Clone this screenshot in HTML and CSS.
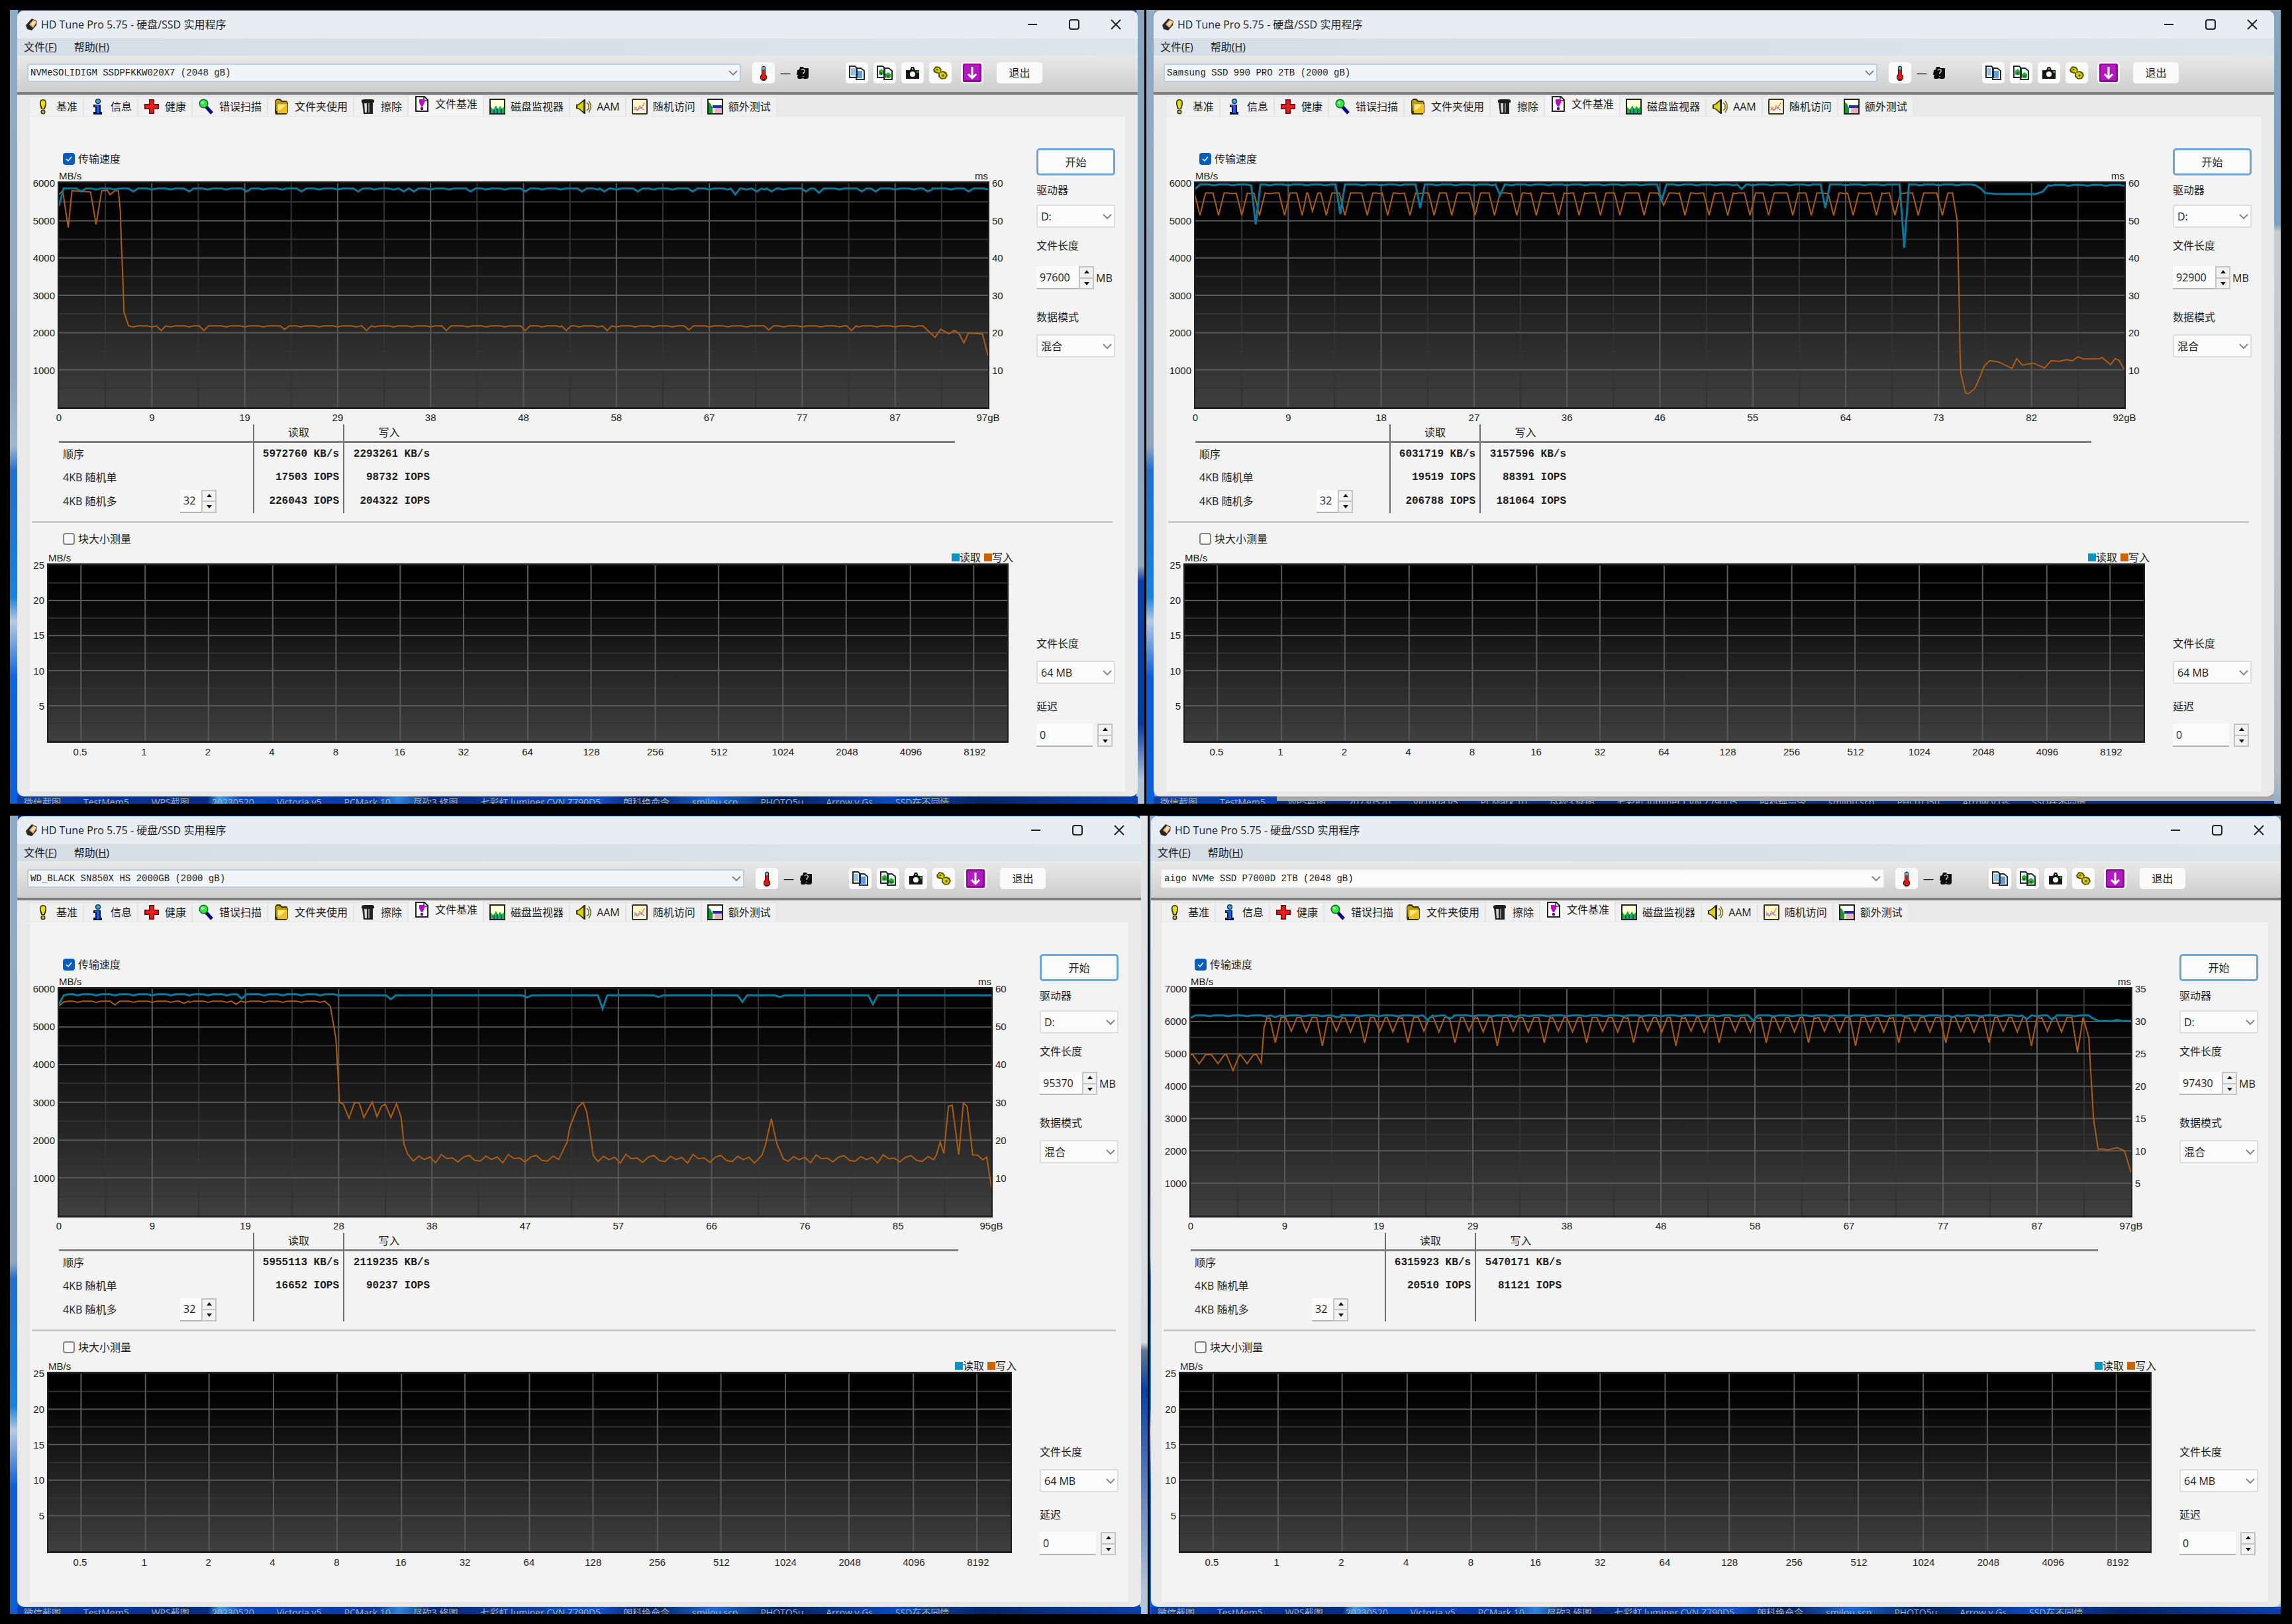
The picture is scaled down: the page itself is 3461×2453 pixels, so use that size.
FILE: index.html
```html
<!doctype html>
<html lang="zh-CN">
  <head>
    <meta charset="UTF-8" />
    <meta content="width=device-width, initial-scale=1.0" name="viewport" />
    <title>HD Tune Pro 5.75 - 硬盘/SSD 实用程序</title>
    <link rel="stylesheet" href="styles.css">
  </head>
  <body>
    <svg class="sprite" aria-hidden="true">
      <defs>
        <linearGradient id="plotFill" x1="0" y1="0" x2="0" y2="1">
          <stop offset="0.1" stop-color="#000" />
          <stop offset="1" stop-color="#404040" />
        </linearGradient>
      </defs>
      <symbol id="i-app" viewBox="0 0 20 20">
        <path d="M1 11L10 1l8 4-1 6-7 8-7-2z" fill="#2a2320" />
        <path d="M6 10l6-7 6 3-6 9z" fill="#e9b877" />
        <path d="M9 9l4-4 3 1-4 6z" fill="#fbe3bd" />
      </symbol>
      <symbol id="i-bench" viewBox="0 0 24 24">
        <path d="M12 1c4 0 5 3 5 6 0 4-2 6-2 9H9c0-3-2-5-2-9 0-3 1-6 5-6z" fill="#222" />
        <path d="M12 2.500c3 0 3.500 2 3.500 4.500 0 3-2 5-2 8h-3c0-3-2-5-2-8 0-2.500.5-4.500 3.500-4.500z" fill="#e8e000" />
        <circle cx="12" cy="20" r="3.500" fill="#222" />
        <circle cx="12" cy="20" r="2" fill="#d8cf00" />
      </symbol>
      <symbol id="i-info" viewBox="0 0 24 24">
        <circle cx="13" cy="4" r="4" fill="#112" />
        <circle cx="13" cy="4" r="2.800" fill="#22b8e6" />
        <path d="M6 9h11v11h2v4H6v-4h3v-7H6z" fill="#0a1440" />
        <path d="M8 10h7v12h-4V12H8z" fill="#1a5cf0" />
      </symbol>
      <symbol id="i-health" viewBox="0 0 24 24">
        <path d="M8 1h8v7h7v8h-7v7H8v-7H1V8h7z" fill="#5a0c0c" />
        <path d="M9.500 2.500h5v7h7v5h-7v7h-5v-7h-7v-5h7z" fill="#ee1c1c" />
      </symbol>
      <symbol id="i-scan" viewBox="0 0 24 24">
        <path d="M12 12l9 10" stroke="#0a0a7a" stroke-width="5" />
        <circle cx="8.500" cy="7.500" r="7" fill="#14641c" />
        <circle cx="8.500" cy="7.500" r="5.500" fill="#35e84a" />
        <circle cx="7" cy="6" r="2" fill="#a8ffb0" />
      </symbol>
      <symbol id="i-folder" viewBox="0 0 24 24">
        <path d="M2 3l3-3h5l3 3h7l2 4v14l-3 3H3l-1-3z" fill="#3a3208" />
        <path d="M3 4l2-2h4l3 3h8v14H4z" fill="#b79a10" />
        <rect x="6" y="8" width="15" height="14" rx="1" fill="#f0c020" />
        <path d="M7 9h12l-9 8H7z" fill="#ffe878" />
      </symbol>
      <symbol id="i-trash" viewBox="0 0 24 24">
        <path d="M3 2l4-1h12l3 1v4H3z" fill="#1c1c1c" />
        <path d="M4 6h16v17H6z" fill="#222" />
        <path d="M7 7h4v14H8z" fill="#d4d4d4" />
        <path d="M13 7h2v14h-2z" fill="#888" />
      </symbol>
      <symbol id="i-filebench" viewBox="0 0 24 24">
        <path d="M3 1h13l5 5v17H3z" fill="#fff" stroke="#222" stroke-width="2" />
        <path d="M15 1v6h6" fill="none" stroke="#222" stroke-width="1.500" />
        <path d="M8 5h8v5l-3 6h-2l-3-6z" fill="#c000c8" />
        <circle cx="12" cy="19" r="2.200" fill="#6a0070" />
      </symbol>
      <symbol id="i-monitor" viewBox="0 0 24 24">
        <rect x="1" y="1" width="22" height="22" fill="#ffffd8" stroke="#222" stroke-width="2" />
        <path d="M2 22V12l3 4 2-1 3-5 3 6 3-5 3 4 3-3v10z" fill="#18b82c" />
        <path d="M6 22v-5h2v5zM11 22v-7h2v7zM17 22v-6h2v6z" fill="#1636e0" />
      </symbol>
      <symbol id="i-sound" viewBox="0 0 24 24">
        <path d="M1 9l4-1 8-7h2v22h-2l-8-7-4-1z" fill="#2a2800" />
        <path d="M3 10l3-1 6-5v16l-6-5-3-1z" fill="#e0d400" />
        <path d="M17 6l3 3v6l-3 3M20 3l3 6v6l-3 6" fill="none" stroke="#6b6600" stroke-width="1.500" />
      </symbol>
      <symbol id="i-random" viewBox="0 0 24 24">
        <rect x="1" y="1" width="22" height="22" rx="1" fill="#fff6c8" stroke="#333" stroke-width="2" />
        <path d="M4 17l3-3 2 4 3-7 3 3 4-8" fill="none" stroke="#e05a3a" stroke-width="1.500" stroke-dasharray="2 1" />
        <path d="M4 12l4 6 5-4 6 3" fill="none" stroke="#9a90e8" stroke-width="1.500" />
      </symbol>
      <symbol id="i-extra" viewBox="0 0 24 24">
        <rect x="1" y="1" width="22" height="22" fill="#fffff0" stroke="#222" stroke-width="2" />
        <path d="M2 6c3 0 4 4 6 8v8H2z" fill="#149a28" />
        <path d="M8 10h14v4H8z" fill="#2030b0" />
        <path d="M11 14h11v8H11z" fill="#e8b0b8" />
      </symbol>
      <symbol id="i-thermo" viewBox="0 0 24 24">
        <path d="M9 3q3-3 6 0v11l2 3v4l-3 3h-4l-3-3v-4l2-3z" fill="#3a1010" />
        <path d="M10 3h4v4h-4z" fill="#30d0d8" />
        <path d="M10 7h4v8l2 3v3l-2 1h-4l-2-1v-3l2-3z" fill="#e81414" />
      </symbol>
      <symbol id="i-degree" viewBox="0 0 20 20">
        <path d="M2 6l3-1 1-4h5l1 2h7v14l-2 2h-5l-2-1-2 1H3l-1-3 1-3H1z" fill="#0c0c0c" />
        <path d="M8 6q3-3 5 0 1 3-2 4v2M11 15v1" fill="none" stroke="#ccc" stroke-width="1.500" />
      </symbol>
      <symbol id="i-copy" viewBox="0 0 24 24">
        <path d="M1 2h8l3 3v14H1zM11 5h7l5 4v13H11z" fill="#fff" stroke="#2a2a2a" stroke-width="2" />
        <path d="M3 5h6v11H3z" fill="#8ac4f4" />
        <path d="M13 9h7v11h-7z" fill="#5a9cf0" />
      </symbol>
      <symbol id="i-copyimg" viewBox="0 0 24 24">
        <path d="M1 2h8l3 3v14H1zM11 5h7l5 4v13H11z" fill="#e8f4ff" stroke="#2a2a2a" stroke-width="2" />
        <path d="M3 9l4-3 3 3v6l-4-1-3 1zM13 14l4-3 4 3v5l-4 1-4-1z" fill="#28b428" />
        <path d="M5 11h3v4H5zM15 16h4v3h-4z" fill="#166a16" />
      </symbol>
      <symbol id="i-camera" viewBox="0 0 24 24">
        <path d="M2 8h6l2-5h4l2 5h6v13H2z" fill="#161616" />
        <circle cx="12" cy="14" r="4" fill="#fff" />
        <path d="M11 5h2v2h-2z" fill="#bbb" />
        <path d="M18 9h3v3h-3z" fill="#2ca82c" />
      </symbol>
      <symbol id="i-options" viewBox="0 0 24 24">
        <path d="M1 7l4-5 6 1 3 4-1 3 3-1 5 2 2 5-3 5-6 1-5-4v-5l-2 0-5-2z" fill="#5c5800" />
        <path d="M3 7l3-3 4 1 2 3-1 4 5-1 3 2 2 3-3 4-4 0-3-3 0-5-6-2z" fill="#d8ce00" />
        <circle cx="7" cy="7" r="1.500" fill="#5c5800" />
        <circle cx="16" cy="16" r="1.800" fill="#5c5800" />
      </symbol>
      <symbol id="i-save" viewBox="0 0 28 28">
        <rect width="28" height="28" rx="2" fill="#8c0a96" />
        <rect x="2" y="2" width="23" height="23" rx="1" fill="#b418c0" />
        <path d="M14 5v16M8 16l6 6 6-6" fill="none" stroke="#fff" stroke-width="3" />
      </symbol>
      <symbol id="i-min" viewBox="0 0 16 16"><path d="M1 8h14" stroke="#222" stroke-width="2" /></symbol>
      <symbol id="i-max" viewBox="0 0 16 16">
        <rect x="1" y="1" width="14" height="14" rx="3" fill="none" stroke="#222" stroke-width="2" />
      </symbol>
      <symbol id="i-close" viewBox="0 0 16 16"><path d="M1 1l14 14M15 1L1 15" stroke="#222" stroke-width="2" /></symbol>
      <symbol id="i-chevron" viewBox="0 0 14 14">
        <path d="M1 4l6 6 6-6" fill="none" stroke="#888" stroke-width="2" />
      </symbol>
      <symbol id="i-up" viewBox="0 0 8 8"><path d="M0 6l4-5 4 5z" fill="#111" /></symbol>
      <symbol id="i-down" viewBox="0 0 8 8"><path d="M0 2l4 5 4-5z" fill="#111" /></symbol>
    </svg>

    <main class="wall" id="wall"></main>

    <script src="main.js"></script>
  </body>
</html>
```
FILE: styles.css
```css
* {
  box-sizing: border-box;
  padding: 0;
  margin: 0;
}

body {
  background: #000;
  color: #1c1c1c;
  font: 16px/24px "Open Sans", "Noto Sans CJK SC", sans-serif;
}

button,
input,
select {
  font: inherit;
  color: inherit;
  border: 0;
  outline: 0;
  appearance: none;
}

svg {
  display: block;
}

.sprite {
  position: absolute;
  width: 0;
  height: 0;
}

/* four desktops */

.wall {
  display: grid;
  grid-template-rows: 1199fr 1206fr;
  row-gap: 18px;
  min-height: 100vh;
  padding: 15px 0 15px 15px;
}

.wall-row {
  display: flex;
  gap: 3px;
  padding-right: 17px;
}

.desktop {
  display: flex;
  flex-direction: column;
  flex: 1 1 0;
  min-width: 0;
  padding: 1px 10px 0 11px;
  background:
    linear-gradient(#8fabc6 0, #8fa6bd 46%, #9fb8d0 55%, #1e6fd2 58%, #1583e0 74%, #b5cbe2 77%, #0a66e6 84%, #0a5fdc 100%) left / 12px 100% no-repeat,
    linear-gradient(#86a5c0 0, #90a8c0 70%, #0b3fa8 72%, #0a3c9e 90%, #b0c4d8 97%) right / 12px 100% no-repeat,
    #0a3fae;
}

.desktop-light {
  background:
    linear-gradient(#8fabc6 0, #8fa6bd 55%, #1e6fd2 58%, #1583e0 74%, #b5cbe2 77%, #0a5fdc 84%) left / 12px 100% no-repeat,
    linear-gradient(#86a5c0 0, #7b9fc0 27%, #c9cdd2 28%, #b8bcc0 96%, #8fb0cc 100%) right / 12px 100% no-repeat,
    #9a9a9a;
}

.desktop-grey {
  background:
    linear-gradient(#8fabc6 0, #8fa6bd 56%, #1e6fd2 58%, #1583e0 74%, #b5cbe2 77%, #0a5fdc 84%) left / 12px 100% no-repeat,
    linear-gradient(#e2e4e6 0, #d8dcdf 66%, #5d7896 67%, #0b3fa8 72%, #b0c4d8 97%) right / 12px 100% no-repeat,
    #0a3fae;
}

.desktop-edge {
  flex: 0 0 1708px;
  padding-right: 0;
  padding-left: 2px;
}

.icons-row {
  display: flex;
  gap: 34px;
  height: 11px;
  padding: 1px 10px;
  overflow: hidden;
  color: #aab0a6;
  font-size: 14px;
  line-height: 16px;
  white-space: nowrap;
  background: linear-gradient(100deg, #0a3fae, #062a86 17%, #3aa0e8 18%, #0a48c0 20%, #0838a4 32%, #2a86e0 34%, #06257c 37%, #1050c8 52%, #041a5c 56%, #1868d8 62%, #04215e 68%, #0a48c0 78%, #052468 86%, #0a3fae);
}

.desktop-light .icons-row {
  background: linear-gradient(90deg, #0a3fae 11%, transparent 11%), linear-gradient(#a8a8a8 60%, #0a2f80 61%);
}

/* window */

.window {
  display: flex;
  flex: 1;
  flex-direction: column;
  overflow: hidden;
  background: #e9e9e9;
  border-radius: 10px;
}

.titlebar {
  display: flex;
  align-items: center;
  height: 42px;
  padding: 0 12px;
  background: #e8edf4;
}

.titlebar .icon {
  width: 20px;
  height: 20px;
  margin-right: 4px;
}

.titlebar h1 {
  flex: 1;
  font-size: 16px;
  font-weight: 400;
}

.winbtn {
  width: 16px;
  height: 16px;
  margin-left: 47px;
  background: none;
}

.winbtn:last-child {
  margin-right: 13px;
}

.winbtn svg {
  width: 16px;
  height: 16px;
}

.menubar {
  display: flex;
  gap: 26px;
  height: 26px;
  padding: 0 10px;
  background: linear-gradient(90deg, #d5dde7, #dce4ec);
}

.menubar button {
  line-height: 26px;
  background: none;
}

.toolbar {
  display: flex;
  align-items: center;
  height: 59px;
  padding: 0 144px 4px 15px;
  background: linear-gradient(#e9e9e9, #cdcdcd);
  border-bottom: 4px solid #7c7c7c;
}

.select {
  display: grid;
  align-items: center;
}

.select select,
.select svg {
  grid-area: 1 / 1;
}

.select select {
  width: 100%;
  height: 35px;
  padding: 0 28px 0 5px;
  background: #fbfbfb;
  border: 2px solid #dedede;
  border-radius: 3px;
}

.select svg {
  justify-self: end;
  width: 14px;
  height: 14px;
  margin-right: 5px;
  pointer-events: none;
}

.toolbar .select {
  flex: 1;
  margin-right: 17px;
}

.toolbar .select select {
  height: 28px;
  padding-left: 3px;
  font: 14px/20px "Liberation Mono", monospace;
  background: #f1f5f9;
  border-color: #b9cfe0;
}

.window-edge .toolbar .select select {
  background: #fbfbfb;
  border-color: #f1f1f1;
}

.tool {
  display: flex;
  align-items: center;
  justify-content: center;
  width: 34px;
  height: 32px;
  margin-right: 8px;
  background: #fafafa;
  border-radius: 5px;
}

.tool svg {
  width: 24px;
  height: 24px;
}

.tool-save {
  margin-left: 6px;
  margin-right: 20px;
}

.tool-save svg {
  width: 28px;
  height: 28px;
}

.temp {
  display: flex;
  flex: 0 0 99px;
  align-items: center;
  gap: 8px;
}

.temp svg {
  width: 20px;
  height: 20px;
}

.exit {
  width: 69px;
  height: 32px;
  background: #fafafa;
  border-radius: 5px;
}

/* tabs */

.client {
  display: flex;
  flex: 1;
  flex-direction: column;
  padding: 0 18px 6px;
}

.window-edge .client {
  padding-left: 15px;
}

.tabs {
  display: flex;
  align-items: flex-end;
  height: 32px;
}

.tab {
  display: flex;
  align-items: center;
  gap: 8px;
  height: 29px;
  padding: 0 8px;
  white-space: nowrap;
  background: #f0f0f0;
  border: 1px solid #e4e4e4;
  border-bottom: 0;
}

.tab svg {
  width: 24px;
  height: 24px;
}

.tab-on {
  height: 32px;
  padding-bottom: 5px;
  background: #f4f4f4;
}

.panel {
  display: flex;
  flex: 1;
  flex-direction: column;
  background: #f3f3f3;
  border: 1px solid #e6e6e6;
}

.part {
  display: flex;
  gap: 21px;
  padding-right: 15px;
}

.part-speed {
  flex: 614 1 0;
}

.part-block {
  flex: 408 1 0;
}

.divider {
  height: 3px;
  margin: 0 19px 0 3px;
  border: 0;
  background: #cbcbcb;
}

.main {
  display: flex;
  flex: 1;
  flex-direction: column;
  min-width: 0;
}

.check {
  display: flex;
  align-items: center;
  gap: 5px;
  height: 24px;
  padding-left: 50px;
}

.part-speed .check {
  margin-top: 52px;
}

.part-block .check {
  margin-top: 12px;
}

.check input {
  width: 18px;
  height: 18px;
  background: #f8f8f8;
  border: 2px solid #858585;
  border-radius: 4px;
}

.check input:checked {
  background: #0a5dbb url("data:image/svg+xml,%3Csvg xmlns='http://www.w3.org/2000/svg' viewBox='0 0 14 14'%3E%3Cpath d='M3 7l3 3 5-6' fill='none' stroke='%23fff' stroke-width='1.500'/%3E%3C/svg%3E");
  border-color: #0a5dbb;
}

/* charts */

.chart {
  display: grid;
  flex: 1;
  grid-template-rows: 22px 1fr 23px;
  grid-template-columns: 42px 1fr 50px;
  font: 15px/16px "Liberation Sans", sans-serif;
}

.chart-block {
  grid-template-rows: 25px 1fr 74px;
  grid-template-columns: 26px 1fr 21px;
}

.chart-head {
  display: flex;
  grid-column: 2;
  align-items: flex-end;
  justify-content: space-between;
  padding: 0 2px;
}

.legend {
  display: flex;
  align-items: center;
  gap: 5px;
  margin-right: -9px;
  font: 16px/20px "Noto Sans CJK SC", sans-serif;
}

.legend i {
  display: inline-block;
  width: 12px;
  height: 12px;
}

.legend .read {
  background: #0a94c4;
}

.legend .write {
  background: #cc6200;
}

.axis-y {
  display: flex;
  grid-row: 2;
  grid-column: 1;
  flex-direction: column;
  justify-content: space-between;
  padding: 3px 4px 2px 0;
  text-align: right;
}

.axis-y span {
  display: block;
  height: 0;
  line-height: 0;
}

.axis-right {
  grid-column: 3;
  padding-left: 4px;
  text-align: left;
}

.plot-wrap {
  display: flex;
  grid-row: 2;
  grid-column: 2;
  min-height: 0;
  contain: size;
}

.plot {
  width: 100%;
  height: 100%;
  background: #1f1f1f;
  border: 3px solid #1f1f1f;
  border-right-width: 2px;
  border-left-width: 2px;
}

.plot path,
.plot polyline {
  fill: none;
  vector-effect: non-scaling-stroke;
}

.plot .major {
  stroke: #595959;
  stroke-width: 2px;
}

.plot .minor {
  stroke: #333;
  stroke-width: 2px;
}

.plot .read {
  stroke: #08799d;
  stroke-width: 3px;
}

.plot .write {
  stroke: #ad5c12;
  stroke-width: 2px;
}

.axis-x {
  display: flex;
  grid-row: 3;
  grid-column: 2;
  justify-content: space-between;
  padding: 5px 2px 0;
}

.chart-block .axis-x {
  padding-top: 6px;
  padding-right: 51px;
  padding-left: 50px;
}

.axis-x span {
  display: flex;
  justify-content: center;
  width: 0;
  white-space: nowrap;
}

/* results */

.results {
  width: calc(100% - 146px);
  height: 134px;
  margin: 0 0 12px 44px;
  border-collapse: collapse;
}

.results th {
  font-weight: 400;
  text-align: left;
}

.results thead th {
  height: 26px;
  border-bottom: 3px solid #808080;
  text-align: center;
}

.results tbody th {
  width: 294px;
  padding-left: 6px;
}

.results .num {
  width: 136px;
  border-right: 2px solid #6b6b6b;
  border-left: 2px solid #6b6b6b;
}

.results .num + .num {
  border-right: 0;
}

.results td.num {
  padding-right: 6px;
  font: bold 16px/20px "Liberation Mono", monospace;
  text-align: right;
  white-space: nowrap;
}

.results tbody tr {
  height: 35px;
}

.queue {
  display: flex;
  align-items: center;
  justify-content: space-between;
  padding-right: 55px;
}

/* form column */

.side {
  display: flex;
  flex: 0 0 119px;
  flex-direction: column;
}

.part-speed .side {
  padding-top: 48px;
}

.part-block .side {
  padding-top: 170px;
}

.start {
  height: 41px;
  margin-bottom: 10px;
  background: #fbfbfb;
  border: 3px solid #6ba6d8;
  border-radius: 5px;
}

.side label {
  margin-bottom: 10px;
}

.side .select {
  margin-bottom: 15px;
}

.part-block .side label {
  margin-bottom: 14px;
}

.part-block .side .select {
  margin-bottom: 22px;
}

.side .unit {
  display: flex;
  align-items: center;
  gap: 3px;
  margin-top: 9px;
  margin-bottom: 30px;
}

.side .unit + label {
  margin-bottom: 14px;
}

.spin {
  display: flex;
  height: 35px;
}

.spin input {
  width: 32px;
  padding-left: 5px;
  background: #fbfbfb;
  border-bottom: 2px solid #b5b5b5;
}

.side .spin input {
  width: 64px;
}

.side .delay {
  justify-content: space-between;
  padding-right: 4px;
}

.side .delay input {
  width: 85px;
}

.arrows {
  display: flex;
  flex-direction: column;
  gap: 2px;
  padding: 2px;
  background: #c4c4c4;
}

.arrows button {
  display: flex;
  flex: 1;
  align-items: center;
  justify-content: center;
  width: 19px;
  background: #f1f1f1;
}

.arrows svg {
  width: 8px;
  height: 8px;
}
```
FILE: main.js
```js
const TABS = [
  ['bench', '基准'],
  ['info', '信息'],
  ['health', '健康'],
  ['scan', '错误扫描'],
  ['folder', '文件夹使用'],
  ['trash', '擦除'],
  ['filebench', '文件基准'],
  ['monitor', '磁盘监视器'],
  ['sound', 'AAM'],
  ['random', '随机访问'],
  ['extra', '额外测试'],
]

const BLOCKS = [0.5, 1, 2, 4, 8, 16, 32, 64, 128, 256, 512, 1024, 2048, 4096, 8192]

const DESKTOP_ICONS = [
  '微信截图', 'TestMem5', 'WPS截图', '20230520', 'Victoria.v5', 'PCMark 10', '尽砍3.修图',
  '七彩虹 luminer CVN Z790D5', '朗科绝命令', 'smilou.scp', 'PHOTO5u', 'Arrow.v.Gs', 'SSD在不同情',
]

// flat stretch from x0 to x1 with a light ripple and v-shaped dips [x, value]
function flat(x0, x1, base, dips = [], half = 5, ripple = 25) {
  const pts = []
  for (let x = x0; x <= x1; x += 5) {
    if (dips.some((d) => Math.abs(d[0] - x) < half)) continue
    pts.push([x, base + ((x * 7) % 4 < 1 ? -ripple : 0)])
  }
  dips.forEach(([x, v]) => {
    pts.push([x - half, base], [x, v], [x + half, base])
  })
  return pts.sort((a, b) => a[0] - b[0])
}

// uneven saw between low and high
function wave(x0, x1, low, high) {
  const pts = []
  const mix = [0.2, 0.8, 0.4, 0.7, 0, 1, 0.5, 0.6, 0.1, 0.7, 0.9, 0.3]
  for (let x = x0, i = 0; x <= x1; x += 6, i++) {
    pts.push([x, low + (high - low) * mix[i % mix.length]])
  }
  return pts
}

const at = (list, value) => list.map((x) => (Array.isArray(x) ? x : [x, value]))

// saw teeth of the fourth drive: one deep dip, then two shallow ones
function teeth() {
  const deep = [90, 140, 185, 231, 281, 326, 376, 421, 471, 516, 562, 612, 657, 707, 753, 803, 849, 894, 943]
  const pts = []
  deep.forEach((x, i) => {
    pts.push([x, i === 18 ? 5050 : i % 4 === 1 ? 5240 : 5340])
    const next = deep[i + 1]
    if (next) {
      pts.push([Math.round(x + (next - x) * 0.34), 5700], [Math.round(x + (next - x) * 0.66), 5680])
    }
  })
  return pts
}

const DRIVES = [
  {
    disk: 'NVMeSOLIDIGM SSDPFKKW020X7 (2048 gB)',
    length: 97600,
    max: 6000,
    left: [6000, 5000, 4000, 3000, 2000, 1000, ''],
    right: [60, 50, 40, 30, 20, 10, ''],
    x: [0, 9, 19, 29, 38, 48, 58, 67, 77, 87, '97gB'],
    rows: [['5972760 KB/s', '2293261 KB/s'], ['17503 IOPS', '98732 IOPS'], ['226043 IOPS', '204322 IOPS']],
    read: [[0, 5400], [5, 5870]].concat(
      flat(10, 1000, 5865, at([24, 80, 140, 202, 261, 322, 371, 382, 443, 502, 563, 587, 623, 682, [728, 5700], 751, 767, 804, [818, 5750], 864, 879, 935, 979], 5785)),
    ),
    write: [[0, 5700], [4, 5800], [10, 4820], [14, 5800], [34, 5770], [40, 4900], [46, 5800], [52, 5820], [55, 5700], [60, 5800], [64, 5800], [66, 5300], [67, 4500], [69, 3300], [70, 2550]].concat(
      flat(75, 932, 2180, at([110, 156, [243, 2080], 331, 417, 502, 546, 590, [678, 2070], [764, 2070], 853], 2050)),
      [[943, 1870], [949, 2090], [958, 1970], [964, 2060], [969, 1960], [974, 1720], [979, 1990], [994, 1960], [1000, 1380]],
    ),
  },
  {
    mod: 'desktop-light',
    disk: 'Samsung SSD 990 PRO 2TB (2000 gB)',
    length: 92900,
    max: 6000,
    left: [6000, 5000, 4000, 3000, 2000, 1000, ''],
    right: [60, 50, 40, 30, 20, 10, ''],
    x: [0, 9, 18, 27, 36, 46, 55, 64, 73, 82, '92gB'],
    rows: [['6031719 KB/s', '3157596 KB/s'], ['19519 IOPS', '88391 IOPS'], ['206788 IOPS', '181064 IOPS']],
    read: [[0, 5850]].concat(
      flat(5, 843, 5970, [[65, 4900], [156, 5180], [242, 5340], [328, 5680], [502, 5550], [588, 5850], [678, 5340], [763, 4270]]),
      [[846, 5850], [850, 5740], [862, 5720], [905, 5720], [912, 5780], [918, 5950]],
      flat(920, 1000, 5960),
    ),
    write: flat(0, 819, 5745, at([5, 25, 50, 69, 96, 115, [126, 5250], 141, 161, 185, 207, 231, 257, 276, 301, 322, 346, 367, 391, 413, 436, 457, 483, [504, 5410], 527, 553, 573, 597, 617, 643, 663, 687, 708, 733, 753, 778, 804], 5145), 6, 20).concat(
      [[820, 5000], [822, 3000], [823, 1500], [824, 900], [829, 380], [832, 360], [839, 500], [844, 780], [849, 1100], [855, 1250], [864, 1220], [879, 1040], [884, 1300], [890, 1130], [902, 1180], [914, 1050], [921, 1240], [930, 1230], [938, 1270], [944, 1240], [950, 1350], [956, 1290], [973, 1300], [976, 1330], [985, 1140], [990, 1300], [994, 1260], [1000, 1000]],
    ),
  },
  {
    mod: 'desktop-grey',
    disk: 'WD_BLACK SN850X HS 2000GB (2000 gB)',
    length: 95370,
    max: 6000,
    left: [6000, 5000, 4000, 3000, 2000, 1000, ''],
    right: [60, 50, 40, 30, 20, 10, ''],
    x: [0, 9, 19, 28, 38, 47, 57, 66, 76, 85, '95gB'],
    rows: [['5955113 KB/s', '2119235 KB/s'], ['16652 IOPS', '90237 IOPS'], ['', '']],
    read: [[0, 5600], [5, 5830]].concat(
      flat(10, 297, 5860, [[196, 5750]]),
      flat(300, 1000, 5830, [[356, 5730], [502, 5780], [583, 5480], [643, 5790], [733, 5660], [773, 5790], [873, 5600]], 5, 0),
    ),
    write: [[0, 5550], [5, 5660]].concat(
      flat(10, 287, 5680, [[60, 5580], [134, 5620], [190, 5600]]),
      [[291, 5550], [297, 4700], [301, 3000], [305, 2950], [311, 2580], [317, 2990], [322, 2990], [327, 2600], [336, 3010], [341, 2620], [346, 2900], [350, 2950], [356, 2600], [362, 2970], [367, 2600], [370, 1900], [374, 1630]],
      wave(380, 540, 1400, 1620),
      [[545, 1950], [548, 2350], [556, 2850], [562, 3000], [566, 2750], [569, 2300], [573, 1600]],
      wave(578, 750, 1390, 1620),
      [[754, 1600], [758, 1900], [764, 2570], [770, 1900], [777, 1500]],
      wave(782, 938, 1400, 1610),
      [[941, 1600], [945, 1950], [949, 1650], [954, 2900], [958, 2920], [965, 1620], [970, 2980], [974, 2900], [980, 1600], [985, 1600], [991, 1480], [995, 1550], [1000, 750]],
    ),
  },
  {
    mod: 'desktop-edge',
    disk: 'aigo NVMe SSD P7000D 2TB (2048 gB)',
    length: 97430,
    max: 7000,
    left: [7000, 6000, 5000, 4000, 3000, 2000, 1000, ''],
    right: [35, 30, 25, 20, 15, 10, 5, ''],
    x: [0, 9, 19, 29, 38, 48, 58, 67, 77, 87, '97gB'],
    rows: [['6315923 KB/s', '5470171 KB/s'], ['20510 IOPS', '81121 IOPS'], ['', '']],
    read: [[0, 6110]].concat(
      flat(5, 955, 6185, [[90, 6130], [155, 6130], [252, 6040], [275, 6070], [345, 6140], [598, 6020], [810, 6130], [889, 6060], [916, 6050]]),
      [[958, 6120], [965, 6020], [980, 6010], [985, 6050], [990, 6020], [1000, 6010]],
    ),
    write: flat(0, 72, 4980, [[9, 4690], [29, 4700], [45, 4490], [60, 4700]], 7, 0).concat(
      [[75, 4720], [78, 5800], [81, 6120]],
      flat(84, 953, 6125, teeth(), 6, 30),
      [[955, 5500], [957, 4500], [960, 3000], [965, 2050], [970, 2060], [975, 2030], [985, 2100], [993, 2000], [1000, 1330]],
    ),
  },
]

const icon = (name, cls = '') => `<svg class="${cls}" aria-hidden="true"><use href="#i-${name}"></use></svg>`
const spans = (list) => list.map((t) => `<span>${t}</span>`).join('')
const line = (pts, max) => pts.map(([x, v]) => `${x},${Math.round(1000 - (v / max) * 1000)}`).join(' ')

const arrows = `<span class="arrows">
  <button type="button" aria-label="增加">${icon('up')}</button>
  <button type="button" aria-label="减少">${icon('down')}</button>
</span>`

function grid(rows, xs, minorXs) {
  let major = ''
  let minor = ''
  for (let i = 0; i < rows; i++) {
    const y = Math.round((1000 / rows) * i)
    if (i) major += `M0 ${y}H1000`
    minor += `M0 ${Math.round(y + 500 / rows)}H1000`
  }
  xs.forEach((x) => (major += `M${x} 0V1000`))
  minorXs.forEach((x) => (minor += `M${x} 0V1000`))
  return `<path class="minor" d="${minor}"/><path class="major" d="${major}"/>`
}

function plot(inner) {
  return `<div class="plot-wrap"><svg class="plot" viewBox="0 0 1000 1000" preserveAspectRatio="none">
    <rect width="1000" height="1000" fill="url(#plotFill)"/>${inner}</svg></div>`
}

function select(id, value, label) {
  const aria = label ? ` aria-label="${label}"` : ''
  return `<div class="select"><select id="${id}"${aria}><option>${value}</option></select>${icon('chevron')}</div>`
}

function speedPart(d, n) {
  const tens = [100, 200, 300, 400, 500, 600, 700, 800, 900]
  const fives = [50, 150, 250, 350, 450, 550, 650, 750, 850, 950]
  const names = ['顺序', '4KB 随机单', '4KB 随机多']
  const rows = d.rows.map((r, i) => {
    const queue = `<div class="queue">${names[i]}<span class="spin"><input type="text" value="32" aria-label="队列">${arrows}</span></div>`
    return `<tr><th scope="row">${i === 2 ? queue : names[i]}</th><td class="num">${r[0]}</td><td class="num">${r[1]}</td><td></td></tr>`
  })
  return `<section class="part part-speed">
    <div class="main">
      <label class="check"><input type="checkbox" checked>传输速度</label>
      <div class="chart">
        <div class="chart-head"><span>MB/s</span><span>ms</span></div>
        <div class="axis-y">${spans(d.left)}</div>
        ${plot(grid(d.left.length - 1, tens, fives) +
          `<polyline class="write" points="${line(d.write, d.max)}"/><polyline class="read" points="${line(d.read, d.max)}"/>`)}
        <div class="axis-y axis-right">${spans(d.right)}</div>
        <div class="axis-x">${spans(d.x)}</div>
      </div>
      <table class="results">
        <thead><tr><th></th><th class="num">读取</th><th class="num">写入</th><th></th></tr></thead>
        <tbody>${rows.join('')}</tbody>
      </table>
    </div>
    <div class="side">
      <button class="start" type="button">开始</button>
      <label for="drive${n}">驱动器</label>
      ${select('drive' + n, 'D:')}
      <label for="length${n}">文件长度</label>
      <div class="unit"><span class="spin"><input id="length${n}" type="text" value="${d.length}">${arrows}</span>MB</div>
      <label for="mode${n}">数据模式</label>
      ${select('mode' + n, '混合')}
    </div>
  </section>`
}

function blockPart(n) {
  const xs = BLOCKS.map((b, i) => Math.round(34 + i * 66.5))
  return `<section class="part part-block">
    <div class="main">
      <label class="check"><input type="checkbox">块大小测量</label>
      <div class="chart chart-block">
        <div class="chart-head"><span>MB/s</span>
          <span class="legend"><span><i class="read"></i>读取</span><span><i class="write"></i>写入</span></span>
        </div>
        <div class="axis-y">${spans([25, 20, 15, 10, 5, ''])}</div>
        ${plot(grid(5, xs, []))}
        <div class="axis-x">${spans(BLOCKS)}</div>
      </div>
    </div>
    <div class="side">
      <label for="block${n}">文件长度</label>
      ${select('block' + n, '64 MB')}
      <label for="delay${n}">延迟</label>
      <div class="spin delay"><input id="delay${n}" type="text" value="0">${arrows}</div>
    </div>
  </section>`
}

function win(d, n) {
  const tabs = TABS.map(([i, t]) => `<button type="button" role="tab" class="tab${i === 'filebench' ? ' tab-on' : ''}">${icon(i)}${t}</button>`)
  const tools = [['copy', '复制'], ['copyimg', '复制图像'], ['camera', '截图'], ['options', '选项'], ['save', '保存']]
    .map(([i, t]) => `<button type="button" class="tool tool-${i}" aria-label="${t}">${icon(i)}</button>`)
  return `<div class="desktop ${d.mod || ''}">
    <article class="window ${d.mod === 'desktop-edge' ? 'window-edge' : ''}">
      <header class="titlebar">${icon('app', 'icon')}<h1>HD Tune Pro 5.75 - 硬盘/SSD 实用程序</h1>
        <button class="winbtn" aria-label="最小化">${icon('min')}</button>
        <button class="winbtn" aria-label="最大化">${icon('max')}</button>
        <button class="winbtn" aria-label="关闭">${icon('close')}</button>
      </header>
      <nav class="menubar"><button>文件(<u>F</u>)</button><button>帮助(<u>H</u>)</button></nav>
      <div class="toolbar">
        ${select('disk' + n, d.disk, '硬盘')}
        <button type="button" class="tool" aria-label="温度">${icon('thermo')}</button>
        <span class="temp">—${icon('degree')}</span>
        ${tools.join('')}
        <button type="button" class="exit">退出</button>
      </div>
      <div class="client">
        <div class="tabs" role="tablist">${tabs.join('')}</div>
        <div class="panel">${speedPart(d, n)}<hr class="divider">${blockPart(n)}</div>
      </div>
    </article>
    <div class="icons-row">${spans(DESKTOP_ICONS)}</div>
  </div>`
}

document.getElementById('wall').innerHTML = [0, 2]
  .map((i) => `<div class="wall-row">${win(DRIVES[i], i)}${win(DRIVES[i + 1], i + 1)}</div>`)
  .join('')
```
